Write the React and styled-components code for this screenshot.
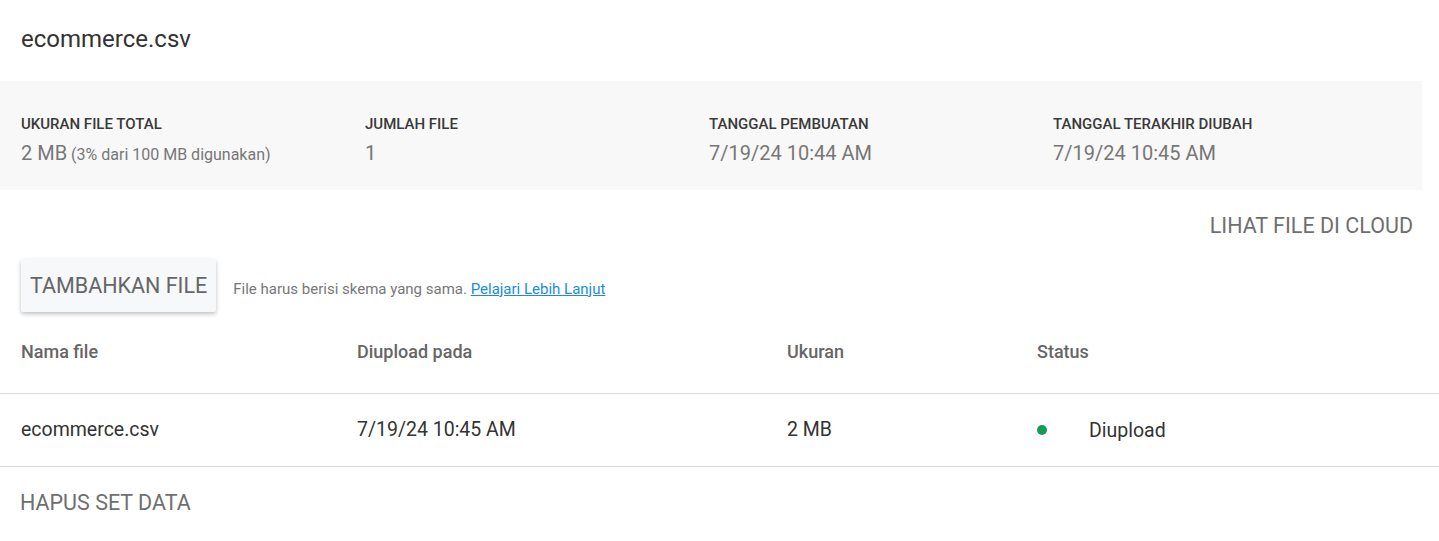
import styled, { createGlobalStyle } from "styled-components";

const GlobalStyle = createGlobalStyle`
  *, *::before, *::after { box-sizing: border-box; }
  body {
    margin: 0;
    background: #fff;
    font-family: Roboto, "Noto Sans", sans-serif;
  }
`;

const stats = [
  { label: "Ukuran file total", value: "2 MB", note: "(3% dari 100 MB digunakan)" },
  { label: "Jumlah file", value: "1" },
  { label: "Tanggal pembuatan", value: "7/19/24 10:44 AM" },
  { label: "Tanggal terakhir diubah", value: "7/19/24 10:45 AM" },
];

const files = [
  { name: "ecommerce.csv", uploaded: "7/19/24 10:45 AM", size: "2 MB", status: "Diupload" },
];

const App = () => {
  return (
    <Page>
      <GlobalStyle />
      <Title>ecommerce.csv</Title>

      <StatsPanel>
        {stats.map((s) => (
          <Stat key={s.label}>
            <StatLabel>{s.label}</StatLabel>
            <StatValue>
              {s.value}
              {s.note && <StatNote> {s.note}</StatNote>}
            </StatValue>
          </Stat>
        ))}
      </StatsPanel>

      <CloudRow>
        <TextButton>Lihat file di cloud</TextButton>
      </CloudRow>

      <UploadRow>
        <RaisedButton>Tambahkan file</RaisedButton>
        <Hint>
          File harus berisi skema yang sama. <HintLink href="#">Pelajari Lebih Lanjut</HintLink>
        </Hint>
      </UploadRow>

      <Table>
        <thead>
          <tr>
            <Th>Nama file</Th>
            <Th>Diupload pada</Th>
            <Th>Ukuran</Th>
            <Th>Status</Th>
          </tr>
        </thead>
        <tbody>
          {files.map((f) => (
            <tr key={f.name}>
              <Td>{f.name}</Td>
              <Td>{f.uploaded}</Td>
              <Td>{f.size}</Td>
              <Td>
                <Status>
                  <Dot />
                  {f.status}
                </Status>
              </Td>
            </tr>
          ))}
        </tbody>
      </Table>

      <DeleteRow>
        <TextButton>Hapus set data</TextButton>
      </DeleteRow>
    </Page>
  );
};

export default App;

const Page = styled.div`
  width: 1439px;
  height: 541px;
  overflow: hidden;
  background: #fff;
`;

const Title = styled.h1`
  margin: 0;
  padding: 25px 21px 0;
  height: 81px;
  font-size: 24px;
  font-weight: 400;
  color: #333;
`;

const StatsPanel = styled.div`
  display: grid;
  grid-template-columns: repeat(4, 344px);
  margin-right: 17px;
  padding: 34px 21px 0;
  height: 109px;
  background: #f8f8f8;
`;

const Stat = styled.div`
  display: flex;
  flex-direction: column;
  gap: 8px;
`;

const StatLabel = styled.div`
  font-size: 15px;
  font-weight: 500;
  text-transform: uppercase;
  color: #3a3a3a;
`;

const StatValue = styled.div`
  font-size: 20px;
  color: #777;
`;

const StatNote = styled.span`
  font-size: 16px;
`;

const CloudRow = styled.div`
  display: flex;
  justify-content: flex-end;
  align-items: flex-start;
  padding: 23px 26px 0 0;
  height: 69px;
`;

const TextButton = styled.button`
  border: none;
  background: none;
  padding: 0;
  font-family: inherit;
  font-size: 21.5px;
  line-height: 25px;
  text-transform: uppercase;
  color: #6f6f6f;
  cursor: pointer;
`;

const UploadRow = styled.div`
  display: flex;
  align-items: center;
  gap: 17px;
  padding: 0 21px;
  height: 53px;
`;

const RaisedButton = styled.button`
  height: 53px;
  padding: 0 9px;
  border: none;
  border-radius: 2px;
  background: #f7f8fa;
  box-shadow: 0 2px 4px rgba(0, 0, 0, 0.25);
  font-family: inherit;
  font-size: 21.5px;
  text-transform: uppercase;
  color: #666;
  cursor: pointer;
`;

const Hint = styled.span`
  font-size: 15px;
  color: #777;
  margin-top: 6px;
`;

const HintLink = styled.a`
  color: #1a8ce0;
`;

const Table = styled.table`
  width: 100%;
  border-collapse: collapse;

  th:nth-child(1), td:nth-child(1) { width: 357px; }
  th:nth-child(2), td:nth-child(2) { width: 430px; }
  th:nth-child(3), td:nth-child(3) { width: 250px; }
`;

const Th = styled.th`
  text-align: left;
  height: 81px;
  padding: 0 0 2px 21px;
  font-size: 18px;
  font-weight: 500;
  color: #666;
  border-bottom: 1px solid #ddd;

  & + & { padding-left: 0; }
`;

const Td = styled.td`
  height: 73px;
  padding: 0 0 0 21px;
  font-size: 19.5px;
  color: #333;
  border-bottom: 1px solid #ddd;

  & + & { padding-left: 0; }
`;

const Status = styled.span`
  display: inline-flex;
  align-items: center;
  gap: 42px;
`;

const Dot = styled.span`
  width: 10px;
  height: 10px;
  border-radius: 50%;
  background: #0f9d58;
`;

const DeleteRow = styled.div`
  padding: 23px 20px 0;
`;
